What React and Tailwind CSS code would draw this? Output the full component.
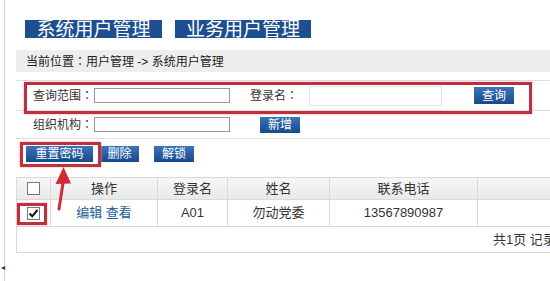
import React from 'react'

const font = { fontFamily: '"Liberation Sans", "Noto Sans CJK SC", sans-serif' }
const tc = { fontFamily: '"Noto Sans CJK TC", sans-serif' }

// full-width colon, centred like the original page
const Colon = () => <span style={tc}>：</span>

function Btn({ children, className = '' }) {
  return (
    <span className={`inline-flex items-center justify-center h-[16px] bg-gradient-to-b from-[#3b74b8] to-[#154b8c] text-white text-[12px] leading-none ${className}`}>
      {children}
    </span>
  )
}

function Box({ checked }) {
  return (
    <span className="inline-flex items-center justify-center w-[13px] h-[13px] border border-[#777] bg-white">
      {checked && (
        <svg width="11" height="11" viewBox="0 0 11 11">
          <path d="M1.5 5.5 L4.2 8.3 L9.5 2" fill="none" stroke="#111" strokeWidth="2" />
        </svg>
      )}
    </span>
  )
}

export default function App() {
  return (
    <div style={font} className="relative w-[550px] h-[281px] overflow-hidden bg-white text-[#333]">
      {/* left frame edge */}
      <div className="absolute left-[4px] top-0 bottom-0 w-px bg-[#cfd6e0]" />
      <div className="absolute left-[1px] top-[262px] text-[8px] text-[#333]">◂</div>

      <div className="pl-[16px]">
        <div className="flex gap-[13px] pt-[20px] pl-[9px]">
          <div className="flex items-center justify-center h-[18px] w-[137px] bg-[#1d4f8f] text-white text-[19px] leading-none whitespace-nowrap">系统用户管理</div>
          <div className="flex items-center justify-center h-[18px] w-[136px] bg-[#1d4f8f] text-white text-[19px] leading-none whitespace-nowrap">业务用户管理</div>
        </div>

        <div className="mt-[12px] h-[22px] bg-[#eeeeee] pl-[10px] text-[12px] leading-[22px] text-[#222]">
          当前位置<Colon />用户管理 -&gt; 系统用户管理
        </div>

        <div className="relative mt-[8px] text-[12px]">
          <div className="flex items-center h-[30px] border-t border-[#dddddd] pl-[17px]">
            <span className="w-[61px]">查询范围<Colon /></span>
            <span className="w-[136px] h-[15px] border border-[#999] bg-white" />
            <span className="ml-[20px] w-[59px]">登录名<Colon /></span>
            <span className="w-[133px] h-[20px] border border-[#e4e4e4] bg-white" />
            <Btn className="ml-[32px] w-[40px] h-[17px]">查询</Btn>
          </div>
          <div className="flex items-center h-[28px] border-t border-[#dddddd] pl-[17px]">
            <span className="w-[61px]">组织机构<Colon /></span>
            <span className="w-[136px] h-[15px] border border-[#999] bg-white" />
            <Btn className="ml-[30px] w-[40px]">新增</Btn>
          </div>
          <div className="flex items-center h-[30px] border-t border-[#dddddd] pl-[10px] gap-[7px]">
            <Btn className="w-[67px]">重置密码</Btn>
            <Btn className="w-[39px]">删除</Btn>
            <Btn className="ml-[8px] w-[40px]">解锁</Btn>
          </div>
          <div className="absolute left-[8px] top-[2px] w-[508px] h-[32px] border-[3px] border-[#c0303c] shadow-[0_0_2px_#f0a0a8]" />
          <div className="absolute left-[4px] top-[62px] w-[81px] h-[25px] border-[3px] border-[#c0303c] shadow-[0_0_2px_#f0a0a8]" />
        </div>

        <div className="relative mt-[9px] w-[620px] text-[13px]">
          <div className="flex h-[23px] border-y border-[#dadada] bg-gradient-to-b from-[#f7f7f7] to-[#e9e9e9]">
            <div className="w-[34px] flex items-center justify-center border-l border-[#dadada]"><Box /></div>
            <div className="w-[107px] flex items-center justify-center border-l border-[#dadada]">操作</div>
            <div className="w-[70px] flex items-center justify-center border-l border-[#dadada]">登录名</div>
            <div className="w-[102px] flex items-center justify-center border-l border-[#dadada]">姓名</div>
            <div className="w-[148px] flex items-center justify-center border-l border-[#dadada]">联系电话</div>
            <div className="flex-1 border-l border-[#dadada]" />
          </div>
          <div className="flex h-[27px] border-b border-[#dadada]">
            <div className="w-[34px] flex items-center justify-center border-l border-[#dadada]"><Box checked /></div>
            <div className="w-[107px] flex items-center justify-center border-l border-[#dadada] text-[#1f5d96]">编辑 查看</div>
            <div className="w-[70px] flex items-center justify-center border-l border-[#dadada]">A01</div>
            <div className="w-[102px] flex items-center justify-center border-l border-[#dadada]">勿动党委</div>
            <div className="w-[148px] flex items-center justify-center border-l border-[#dadada]">13567890987</div>
            <div className="flex-1 border-l border-[#dadada]" />
          </div>
          <div className="flex items-center h-[26px] border-b border-l border-[#dadada] pl-[476px] whitespace-nowrap">
            共1页 记录数<Colon />1条
          </div>
          <div className="absolute left-[1px] top-[26px] w-[30px] h-[22px] border-[3px] border-[#c0303c] shadow-[0_0_2px_#f0a0a8]" />
        </div>
      </div>

      {/* red arrow pointing at 重置密码 */}
      <svg className="absolute left-0 top-0" width="550" height="281" viewBox="0 0 550 281">
        <path d="M63.5 167 L55.5 184 L71 183.5 Z" fill="#d22a36" />
        <path d="M63 183 L59 209" stroke="#d22a36" strokeWidth="3" strokeLinecap="round" />
      </svg>
    </div>
  )
}
